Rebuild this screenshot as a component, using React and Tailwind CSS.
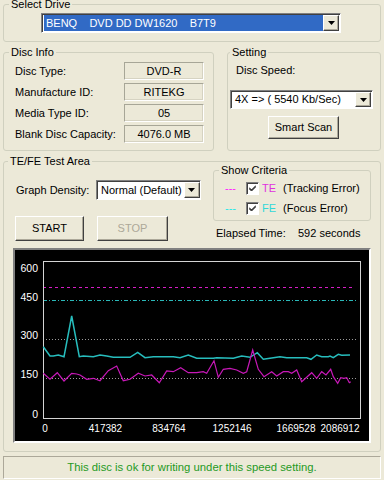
import React from 'react';

const cyan = [
    [28.3, 96.7], [35, 106], [38.3, 106], [43.3, 105], [49, 106.7], [56.7, 66], [64.3, 106.7], [68.3, 106],
    [78.3, 106.7], [85, 105], [91.7, 106], [98.3, 107.3], [115, 107.3], [122.7, 102.3], [130, 107.7],
    [138.3, 106.7], [158.3, 106.7], [165, 107.7], [173.3, 105], [181.7, 108.3], [198.3, 108.3], [201.7, 107.7],
    [218.3, 108.3], [226.7, 106], [235, 107.3], [242.3, 102.7], [248.3, 109.3], [255, 108.3], [265, 106.7],
    [271.7, 107.7], [291.7, 107.7], [296, 109.3], [301.7, 105], [306.7, 106.7], [313.3, 106.7], [315, 106],
    [318.3, 107.7], [323.3, 104.3], [326.7, 105.3], [335, 105],
];

const magenta = [
    [28.3, 123.3], [35, 129.3], [42.3, 122.7], [49, 131], [56.7, 123.3], [61.7, 124], [65, 125], [71.7, 129.3],
    [78.3, 128.3], [85, 130.7], [93.3, 120.7], [101.7, 116], [108.3, 130.7], [115, 129.3], [123.3, 123.3],
    [130, 126], [136.7, 125], [144.3, 132.7], [151.7, 121], [158.3, 121.7], [165.7, 117.7], [173.3, 122.7],
    [181.7, 122.7], [188.3, 121.7], [191.7, 123.3], [199, 110.7], [203.3, 127.3], [208.3, 119.3], [215, 118.3],
    [221.7, 120], [228.3, 123.3], [231.7, 121.7], [237.7, 100], [243.3, 119.3], [249, 126.7], [256.7, 121.7],
    [261.7, 126], [268.3, 121.7], [273.3, 121.7], [276.7, 123.3], [281.7, 120], [286.7, 131.7], [296.7, 122.7],
    [301.7, 128.3], [306.7, 121.7], [311, 125], [315.7, 119.3], [318.3, 126.7], [322.7, 133.3], [325.7, 127.7],
    [329, 128.3], [331.7, 127.7], [334.3, 132.7], [335.7, 131.7],
];

const yLabels = [['600', 17.5], ['450', 46.5], ['300', 85.3], ['150', 124.3], ['0', 163.7]];
const xLabels = [['0', 30], ['417382', 90.5], ['834764', 154], ['1252146', 217], ['1669528', 281], ['2086912', 325]];

const pts = (list) => list.map(([x, y]) => `${x},${y}`).join(' ');

function Group({ title, className, labelClass = 'left-[5px]', children }) {
    return (
        <div className={`relative rounded-[3px] border border-[#d0d0bf] ${className}`}>
            <span className={`absolute top-[-7px] bg-[#ece9d8] px-[2px] leading-[13px] ${labelClass}`}>{title}</span>
            {children}
        </div>
    );
}

function DropArrow() {
    return (
        <div className="flex w-[16px] shrink-0 items-center justify-center border border-t-white border-l-white border-r-[#404040] border-b-[#404040] bg-[#ece9d8] shadow-[inset_-1px_-1px_0_#aca899]">
            <svg width="7" height="4" viewBox="0 0 7 4">
                <polygon points="0,0 7,0 3.5,4" fill="#000" />
            </svg>
        </div>
    );
}

function Combo({ text, className, selected }) {
    return (
        <div
            className={`flex border border-t-[#808080] border-l-[#808080] border-r-white border-b-white bg-white p-px shadow-[inset_1px_1px_0_#404040] ${className}`}
        >
            <div className="flex flex-1 items-center pl-[1px]">
                <span
                    className={`flex h-full w-full items-center whitespace-pre px-[2px] leading-[13px] ${
                        selected ? 'bg-[#316ac5] text-white' : 'text-black'
                    }`}
                >
                    {text}
                </span>
            </div>
            <DropArrow />
        </div>
    );
}

function Button({ children, className, disabled }) {
    return (
        <div
            className={`flex items-center justify-center border border-t-white border-l-white border-r-[#404040] border-b-[#404040] bg-[#ece9d8] shadow-[inset_-1px_-1px_0_#aca899] leading-[13px] ${
                disabled ? 'text-[#aca899]' : 'text-black'
            } ${className}`}
        >
            {children}
        </div>
    );
}

function InfoRow({ label, value }) {
    return (
        <div className="flex h-[18px] items-center">
            <span className="w-[109px] leading-[13px]">{label}</span>
            <div className="flex h-[18px] w-[80px] items-center justify-center border border-t-[#a7a697] border-l-[#a7a697] border-r-white border-b-white leading-[13px] shadow-[inset_-1px_-1px_0_#d6d3c2]">
                {value}
            </div>
        </div>
    );
}

function CheckBox() {
    return (
        <div className="flex h-[13px] w-[13px] items-center justify-center border border-t-[#808080] border-l-[#808080] border-r-white border-b-white bg-white shadow-[inset_1px_1px_0_#404040]">
            <svg width="7" height="7" viewBox="0 0 7 7">
                <path d="M0 2.5 L2.5 5 L7 0.5 M0 3.5 L2.5 6 L7 1.5" stroke="#000" strokeWidth="1" fill="none" />
            </svg>
        </div>
    );
}

function Chart() {
    return (
        <svg width="354" height="191" className="block">
            <rect x="0" y="0" width="354" height="191" fill="#000" />
            <line x1="28" y1="37.5" x2="338" y2="37.5" stroke="#d61cc6" strokeDasharray="3 3" />
            <line x1="28" y1="50.5" x2="343" y2="50.5" stroke="#2ab8b8" strokeDasharray="4 2 1 2" />
            <line x1="28" y1="89.5" x2="343" y2="89.5" stroke="#9a9a9a" strokeDasharray="1 2" />
            <line x1="28" y1="128.5" x2="343" y2="128.5" stroke="#9a9a9a" strokeDasharray="1 2" />
            <rect x="28.5" y="11.5" width="317" height="157" fill="none" stroke="#d4d4d4" />
            <polyline points={pts(cyan)} fill="none" stroke="#27bdbd" strokeWidth="1.5" />
            <polyline points={pts(magenta)} fill="none" stroke="#c818b8" strokeWidth="1.2" />
            {yLabels.map(([t, y]) => (
                <text key={t} x="23" y={y + 4} fill="#fff" fontSize="10.5" textAnchor="end" fontFamily="Liberation Sans, Arial, sans-serif">
                    {t}
                </text>
            ))}
            {xLabels.map(([t, x]) => (
                <text key={t} x={x} y="182" fill="#fff" fontSize="10" textAnchor="middle" fontFamily="Liberation Sans, Arial, sans-serif">
                    {t}
                </text>
            ))}
        </svg>
    );
}

export default function App() {
    return (
        <div className="relative h-[480px] w-[384px] overflow-hidden bg-[#ece9d8] px-[3px] pt-[4px] font-['Liberation_Sans',Arial,sans-serif] text-[11px] text-black">
            {/* Select Drive */}
            <Group title="Select Drive" className="h-[38px] w-[378px]">
                <div className="pl-[37px] pt-[8px]">
                    <Combo
                        text={'BENQ    DVD DD DW1620    B7T9'}
                        selected
                        className="h-[20px] w-[300px]"
                    />
                </div>
            </Group>

            <div className="mt-[10px] flex">
                {/* Disc Info */}
                <Group title="Disc Info" className="h-[99px] w-[211px]">
                    <div className="flex flex-col gap-[3px] pl-[11px] pt-[9px]">
                        <InfoRow label="Disc Type:" value="DVD-R" />
                        <InfoRow label="Manufacture ID:" value="RITEKG" />
                        <InfoRow label="Media Type ID:" value="05" />
                        <InfoRow label="Blank Disc Capacity:" value="4076.0 MB" />
                    </div>
                </Group>

                {/* Setting */}
                <Group title="Setting" className="ml-[13px] h-[99px] w-[154px]" labelClass="left-[2px]">
                    <div className="flex flex-col pl-[2px] pt-[11px]">
                        <span className="ml-[6px] leading-[13px]">Disc Speed:</span>
                        <Combo text="4X => ( 5540 Kb/Sec)" className="mt-[13px] h-[19px] w-[143px]" />
                        <Button className="ml-[38px] mt-[7px] h-[23px] w-[71px]">Smart Scan</Button>
                    </div>
                </Group>
            </div>

            {/* TE/FE Test Area */}
            <Group title="TE/FE Test Area" className="mt-[10px] h-[291px] w-[378px]" labelClass="left-[4px]">
                <div className="flex">
                    <div className="flex w-[209px] flex-col pl-[11px]">
                        <div className="mt-[18px] flex h-[20px] items-center">
                            <span className="ml-px w-[80px] leading-[13px]">Graph Density:</span>
                            <Combo text="Normal (Default)" className="h-[20px] w-[105px]" />
                        </div>
                        <div className="mt-[16px] flex gap-[13px]">
                            <Button className="h-[25px] w-[69px]">START</Button>
                            <Button className="h-[25px] w-[71px]" disabled>
                                STOP
                            </Button>
                        </div>
                    </div>
                    <div className="flex flex-col">
                        <Group title="Show Criteria" className="mt-[8px] h-[51px] w-[158px]">
                            <div className="flex flex-col gap-[7px] pl-[11px] pt-[11px]">
                                <div className="flex h-[13px] items-center leading-[13px]">
                                    <span className="w-[21px] text-[#ff20ff]">---</span>
                                    <CheckBox />
                                    <span className="ml-[3px] w-[21px] text-[#e030e0]">TE</span>
                                    <span>(Tracking Error)</span>
                                </div>
                                <div className="flex h-[13px] items-center leading-[13px]">
                                    <span className="w-[21px] text-[#20e8e8]">---</span>
                                    <CheckBox />
                                    <span className="ml-[3px] w-[21px] text-[#30d8d8]">FE</span>
                                    <span>(Focus Error)</span>
                                </div>
                            </div>
                        </Group>
                        <div className="ml-[3px] mt-[6px] flex leading-[13px]">
                            <span className="w-[82px]">Elapsed Time:</span>
                            <span>592 seconds</span>
                        </div>
                    </div>
                </div>

                {/* Chart */}
                <div className="ml-[9px] mt-[7px] h-[195px] w-[358px] border-2 border-t-[#808080] border-l-[#808080] border-r-white border-b-white">
                    <Chart />
                </div>
            </Group>

            {/* Status */}
            <div className="mt-[4px] flex h-[23px] w-[378px] items-center justify-center border border-t-[#aca899] border-l-[#aca899] border-r-white border-b-white text-[11.3px] leading-[13px] text-[#1f9a1f]">
                This disc is ok for writing under this speed setting.
            </div>
        </div>
    );
}
